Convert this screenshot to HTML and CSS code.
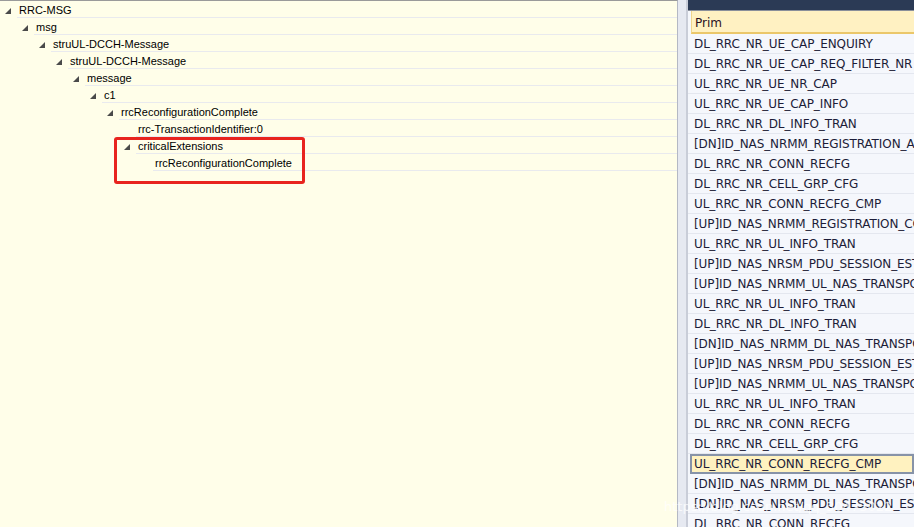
FILE: index.html
```html
<!DOCTYPE html>
<html>
<head>
<meta charset="utf-8">
<link rel="stylesheet" href="styles.css">
</head>
<body>
<div class="app">
  <div class="tree-pane">
    <div class="node lv0"><span class="twist"><svg viewBox="0 0 6 6"><polygon points="6,0 6,6 0,6"/></svg></span><span class="label">RRC-MSG</span></div>
    <div class="node lv1"><span class="twist"><svg viewBox="0 0 6 6"><polygon points="6,0 6,6 0,6"/></svg></span><span class="label">msg</span></div>
    <div class="node lv2"><span class="twist"><svg viewBox="0 0 6 6"><polygon points="6,0 6,6 0,6"/></svg></span><span class="label">struUL-DCCH-Message</span></div>
    <div class="node lv3"><span class="twist"><svg viewBox="0 0 6 6"><polygon points="6,0 6,6 0,6"/></svg></span><span class="label">struUL-DCCH-Message</span></div>
    <div class="node lv4"><span class="twist"><svg viewBox="0 0 6 6"><polygon points="6,0 6,6 0,6"/></svg></span><span class="label">message</span></div>
    <div class="node lv5"><span class="twist"><svg viewBox="0 0 6 6"><polygon points="6,0 6,6 0,6"/></svg></span><span class="label">c1</span></div>
    <div class="node lv6"><span class="twist"><svg viewBox="0 0 6 6"><polygon points="6,0 6,6 0,6"/></svg></span><span class="label">rrcReconfigurationComplete</span></div>
    <div class="node lv7"><span class="twist"></span><span class="label">rrc-TransactionIdentifier:0</span></div>
    <div class="node lv7"><span class="twist"><svg viewBox="0 0 6 6"><polygon points="6,0 6,6 0,6"/></svg></span><span class="label">criticalExtensions</span></div>
    <div class="node lv8"><span class="twist"></span><span class="label">rrcReconfigurationComplete</span></div>
    <div class="highlight"></div>
  </div>
  <div class="splitter"></div>
  <div class="list-pane">
    <div class="topband"></div>
    <div class="header"><span>Prim</span></div>
    <div class="rows">
      <div class="row">DL_RRC_NR_UE_CAP_ENQUIRY</div>
      <div class="row">DL_RRC_NR_UE_CAP_REQ_FILTER_NR</div>
      <div class="row">UL_RRC_NR_UE_NR_CAP</div>
      <div class="row">UL_RRC_NR_UE_CAP_INFO</div>
      <div class="row">DL_RRC_NR_DL_INFO_TRAN</div>
      <div class="row">[DN]ID_NAS_NRMM_REGISTRATION_ACCEPT</div>
      <div class="row">DL_RRC_NR_CONN_RECFG</div>
      <div class="row">DL_RRC_NR_CELL_GRP_CFG</div>
      <div class="row">UL_RRC_NR_CONN_RECFG_CMP</div>
      <div class="row">[UP]ID_NAS_NRMM_REGISTRATION_COMPLETE</div>
      <div class="row">UL_RRC_NR_UL_INFO_TRAN</div>
      <div class="row">[UP]ID_NAS_NRSM_PDU_SESSION_ESTABLISHMENT</div>
      <div class="row">[UP]ID_NAS_NRMM_UL_NAS_TRANSPORT</div>
      <div class="row">UL_RRC_NR_UL_INFO_TRAN</div>
      <div class="row">DL_RRC_NR_DL_INFO_TRAN</div>
      <div class="row">[DN]ID_NAS_NRMM_DL_NAS_TRANSPORT</div>
      <div class="row">[UP]ID_NAS_NRSM_PDU_SESSION_ESTABLISHMENT</div>
      <div class="row">[UP]ID_NAS_NRMM_UL_NAS_TRANSPORT</div>
      <div class="row">UL_RRC_NR_UL_INFO_TRAN</div>
      <div class="row">DL_RRC_NR_CONN_RECFG</div>
      <div class="row">DL_RRC_NR_CELL_GRP_CFG</div>
      <div class="row selected">UL_RRC_NR_CONN_RECFG_CMP</div>
      <div class="row">[DN]ID_NAS_NRMM_DL_NAS_TRANSPORT</div>
      <div class="row">[DN]ID_NAS_NRSM_PDU_SESSION_ESTABLISHMENT</div>
      <div class="row">DL_RRC_NR_CONN_RECFG</div>
    </div>
  </div>
  <div class="watermark">https://blog.csdn.net/qq_30473022</div>
</div>
</body>
</html>
```

FILE: styles.css
```css
html, body {
  margin: 0;
  padding: 0;
  width: 914px;
  height: 527px;
  overflow: hidden;
  background: #fffee9;
}

.app {
  position: relative;
  display: flex;
  width: 914px;
  height: 527px;
  overflow: hidden;
}

.tree-pane {
  position: relative;
  width: 677px;
  flex: none;
  background: #fffee9;
  border-top: 1px solid #9a9a9a;
  border-right: 1px solid #b4b8c4;
  font-family: "Liberation Sans", Arial, sans-serif;
  font-size: 11px;
  color: #000;
}

.node {
  display: flex;
  height: 17px;
}

.lv1 { margin-left: 17px; }
.lv2 { margin-left: 34px; }
.lv3 { margin-left: 51px; }
.lv4 { margin-left: 68px; }
.lv5 { margin-left: 85px; }
.lv6 { margin-left: 102px; }
.lv7 { margin-left: 119px; }
.lv8 { margin-left: 136px; }

.twist {
  width: 17px;
  flex: none;
  display: flex;
  align-items: center;
  justify-content: flex-start;
  padding-left: 5px;
  box-sizing: border-box;
}

.twist svg {
  width: 6px;
  height: 6px;
  fill: #4a4a4a;
  margin-top: 2px;
}

.label {
  flex: 1;
  box-sizing: border-box;
  height: 17px;
  line-height: 18px;
  padding-left: 2px;
  border-bottom: 1px solid #e9eaee;
  white-space: nowrap;
}

.highlight {
  position: absolute;
  left: 114px;
  top: 136px;
  width: 185px;
  height: 41px;
  border: 3px solid #e8241e;
  border-radius: 3px;
}

.splitter {
  width: 8px;
  flex: none;
  background: #e6e9f1;
  border-right: 2px solid #c9cdd8;
}

.list-pane {
  flex: 1;
  display: flex;
  flex-direction: column;
  background: #f5f7fc;
  font-family: "DejaVu Sans", Verdana, sans-serif;
  font-size: 12px;
  color: #1c1c38;
  overflow: hidden;
  min-width: 0;
}

.topband {
  height: 10px;
  flex: none;
  background: #2b3a55;
  border-bottom: 1px solid #8a8f9a;
}

.header {
  height: 23px;
  flex: none;
  margin-left: 3px;
  box-sizing: border-box;
  background: #fff1c2;
  border-left: 1px solid #f0d58a;
  border-bottom: 2px solid #ebc76a;
  display: flex;
  align-items: center;
  padding-left: 3px;
  padding-top: 2px;
  color: #2a1020;
}

.rows {
  display: flex;
  flex-direction: column;
}

.row {
  height: 20px;
  box-sizing: border-box;
  line-height: 21px;
  padding-left: 6px;
  border-bottom: 1px solid #e4e7ef;
  white-space: nowrap;
  letter-spacing: -0.1px;
}

.row.selected {
  margin-left: 2px;
  padding-left: 2px;
  background: #fff2c0;
  border: 2px solid #8793a8;
  line-height: 17px;
}

.watermark {
  position: absolute;
  left: 664px;
  top: 499px;
  font-family: "DejaVu Sans", sans-serif;
  font-size: 13px;
  color: rgba(255, 255, 255, 0.75);
  white-space: nowrap;
}
```
